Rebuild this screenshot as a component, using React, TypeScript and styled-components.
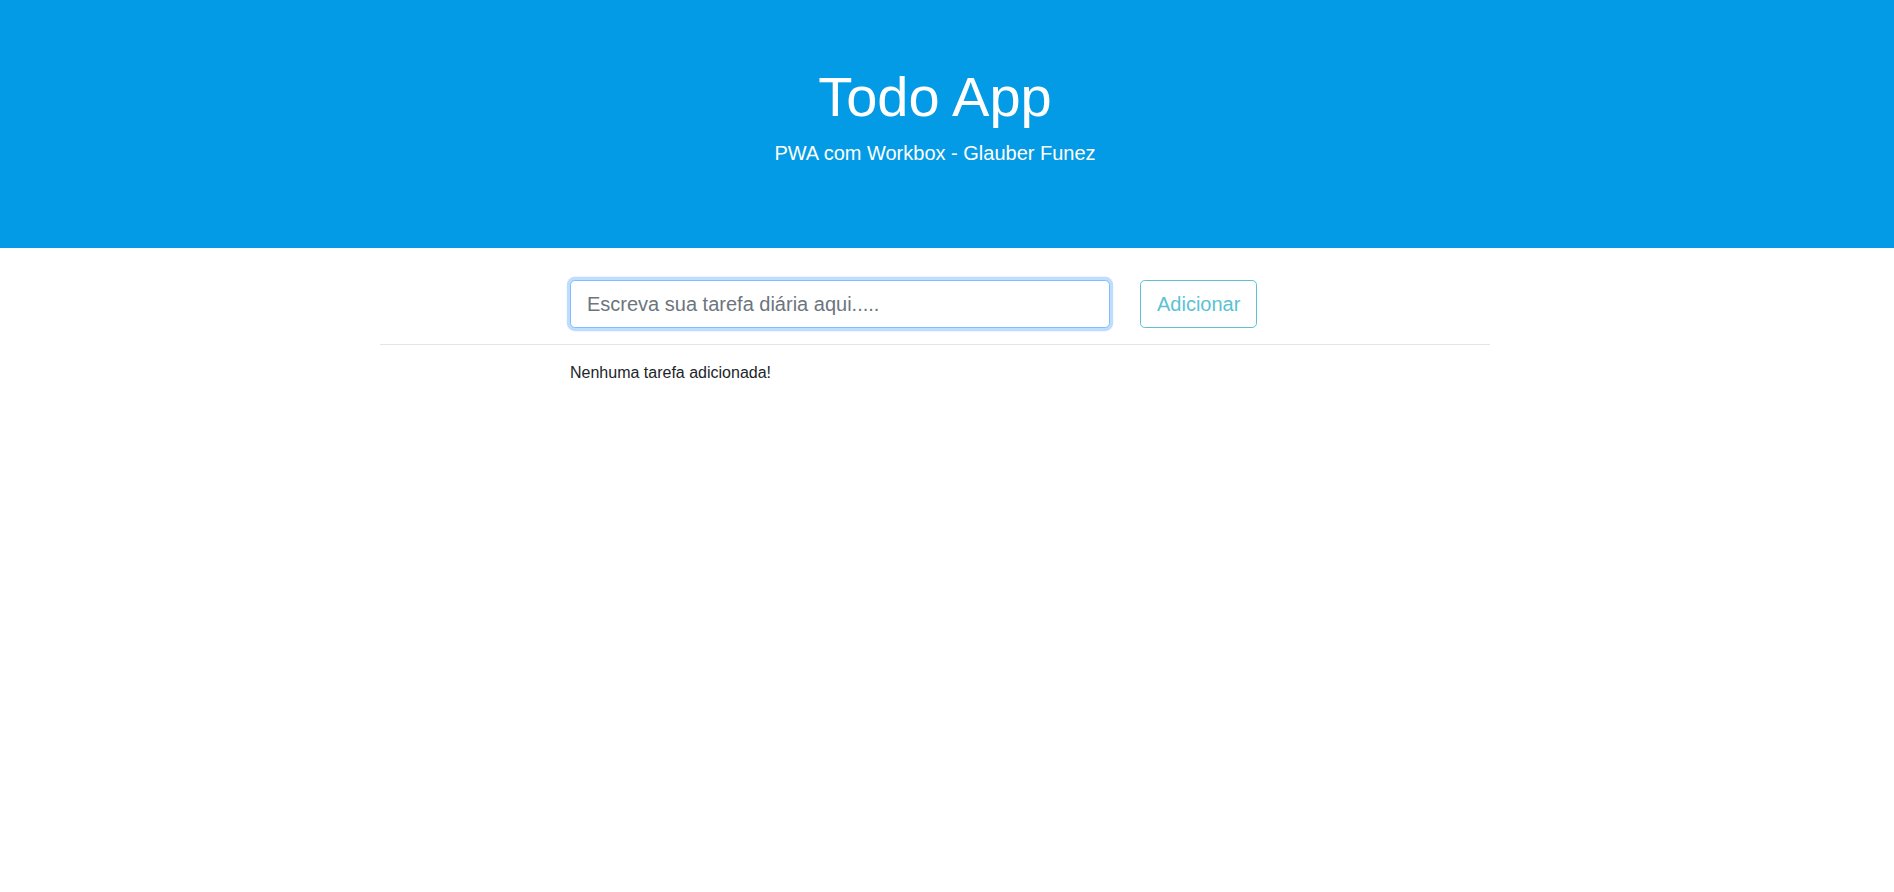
import React from "react";
import styled, { createGlobalStyle } from "styled-components";

const GlobalStyle = createGlobalStyle`
  html, body { margin: 0; padding: 0; background: #fff; }
  body {
    font-family: "Liberation Sans", Arial, sans-serif;
    font-size: 16px;
    line-height: 1.5;
    color: #212529;
  }
  * { box-sizing: border-box; }
`;

const Page = styled.div`
  min-height: 892px;
`;

const Hero = styled.header`
  background: #039be5;
  color: #fff;
  padding: 63px 24px 64px 0;
  text-align: center;
`;

const Title = styled.h1`
  margin: 0 0 8px;
  font-size: 56px;
  font-weight: 300;
  line-height: 1.2;
`;

const Lead = styled.p`
  margin: 0 0 16px;
  font-size: 20px;
  font-weight: 300;
  line-height: 1.5;
`;

const Main = styled.main`
  padding-right: 24px;
`;

const Container = styled.div`
  max-width: 1140px;
  margin: 0 auto;
  padding: 32px 15px 0;
`;

const FormRow = styled.form`
  display: grid;
  grid-template-columns: 540px auto;
  column-gap: 30px;
  margin-left: 190px;
  align-items: start;
`;

const Input = styled.input`
  display: block;
  width: 100%;
  height: 48px;
  padding: 8px 16px;
  font-family: inherit;
  font-size: 20px;
  line-height: 1.5;
  color: #495057;
  background: #fff;
  border: 1px solid #80bdff;
  border-radius: 4.8px;
  outline: 0;
  box-shadow: 0 0 0 3.2px rgba(0, 123, 255, 0.25);
  &::placeholder { color: #6c757d; opacity: 1; }
`;

const OutlineButton = styled.button`
  justify-self: start;
  height: 48px;
  padding: 8px 16px;
  font-family: inherit;
  font-size: 20px;
  line-height: 1.5;
  color: #5bc2d4;
  background: transparent;
  border: 1px solid #5bc2d4;
  border-radius: 4.8px;
  cursor: pointer;
`;

const Divider = styled.hr`
  margin: 16px 0;
  border: 0;
  border-top: 1px solid rgba(0, 0, 0, 0.1);
`;

const EmptyText = styled.p`
  margin: 0 0 0 190px;
  font-size: 16px;
`;

export default function App() {
  return (
    <Page>
      <GlobalStyle />
      <Hero>
        <Title>Todo App</Title>
        <Lead>PWA com Workbox - Glauber Funez</Lead>
      </Hero>
      <Main>
        <Container>
          <FormRow onSubmit={(e) => e.preventDefault()}>
            <Input placeholder="Escreva sua tarefa diária aqui....." />
            <OutlineButton type="submit">Adicionar</OutlineButton>
          </FormRow>
          <Divider />
          <EmptyText>Nenhuma tarefa adicionada!</EmptyText>
        </Container>
      </Main>
    </Page>
  );
}
